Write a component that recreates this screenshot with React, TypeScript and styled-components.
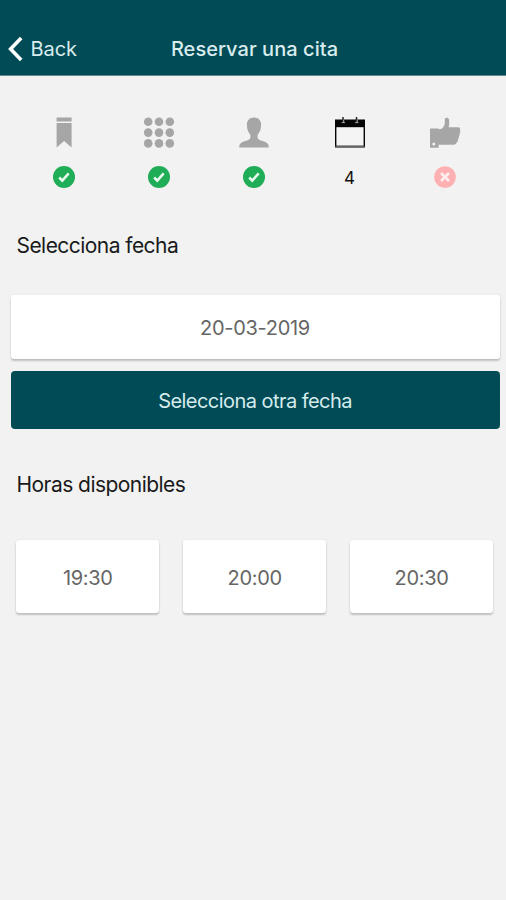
import React from "react";
import styled, { createGlobalStyle } from "styled-components";

const GlobalStyle = createGlobalStyle`
  * { box-sizing: border-box; }
  body {
    margin: 0;
    background: #f2f2f2;
    font-family: Inter, "Liberation Sans", sans-serif;
    color: #1a1a1a;
  }
`;

const Screen = styled.div`
  display: flex;
  flex-direction: column;
  width: 506px;
  height: 900px;
  overflow: hidden;
  background: #f2f2f2;
`;

const Header = styled.header`
  display: grid;
  grid-template-columns: 100px 1fr 97px;
  align-items: center;
  height: 76px;
  padding-top: 22px;
  background: #004b55;
  border-bottom: 1px solid #5f8a90;
  color: #d9ecee;
`;

const BackButton = styled.button`
  display: flex;
  align-items: center;
  gap: 7.5px;
  padding: 0 0 0 8px;
  border: 0;
  background: none;
  color: inherit;
  font: 400 20px/24px Inter, sans-serif;
  letter-spacing: -0.05px;
`;

const Title = styled.h1`
  margin: 0;
  text-align: center;
  font-size: 20px;
  font-weight: 500;
  line-height: 24px;
  letter-spacing: 0.05px;
`;

const Steps = styled.ol`
  display: grid;
  grid-template-columns: repeat(5, 1fr);
  margin: 41px 13.5px 0 16px;
  padding: 0;
  list-style: none;
`;

const Step = styled.li`
  display: flex;
  flex-direction: column;
  align-items: center;
  gap: 18px;
`;

const StepIcon = styled.svg`
  display: block;
  width: 32px;
  height: 31px;
  fill: #a6a6a6;
`;

const StatusIcon = styled.svg`
  display: block;
  width: 22px;
  height: 22px;
`;

const StepNumber = styled.span`
  height: 22px;
  font-size: 17px;
  line-height: 25px;
  color: #111;
`;

const SectionTitle = styled.h2<{ $top: number }>`
  margin: ${(p) => p.$top}px 0 0 16.5px;
  font-size: 21px;
  font-weight: 400;
  line-height: 26px;
  letter-spacing: -0.55px;
`;

const DateActions = styled.div`
  display: flex;
  flex-direction: column;
  gap: 12px;
  margin: 36px 6.5px 0 10.5px;
`;

const Card = styled.button<{ $height: number }>`
  height: ${(p) => p.$height}px;
  padding: 2px 0 0;
  border: 0;
  border-radius: 3px;
  background: #fff;
  box-shadow: 0 2px 2px rgba(0, 0, 0, 0.2), 0 0 2px rgba(0, 0, 0, 0.08);
  color: #666;
  font: 400 20px/24px Inter, sans-serif;
  letter-spacing: -0.3px;
`;

const PrimaryButton = styled.button`
  height: 58px;
  padding: 2px 0 0;
  border: 0;
  border-radius: 4px;
  background: #004b55;
  color: #d5ebee;
  font: 400 20px/24px Inter, sans-serif;
  letter-spacing: -0.55px;
`;

const Hours = styled.div`
  display: grid;
  grid-template-columns: repeat(3, 1fr);
  gap: 24px;
  margin: 42px 13px 0 16.4px;
`;

const DoneStatus = () => (
  <StatusIcon viewBox="0 0 22 22">
    <circle cx="11" cy="11" r="11" fill="#20ad57" />
    <path d="M6.2 11.5 9.3 14.6 15.7 7.4" fill="none" stroke="#e9faef" strokeWidth="2.5" />
  </StatusIcon>
);

const PendingStatus = () => (
  <StatusIcon viewBox="0 0 22 22">
    <circle cx="11" cy="11" r="10.8" fill="#ffb0b2" />
    <path d="M7 7 15 15M15 7 7 15" fill="none" stroke="#fff0f0" strokeWidth="2.5" />
  </StatusIcon>
);

const dots = [5.2, 16, 26.8];

export default function App() {
  return (
    <>
      <GlobalStyle />
      <Screen>
        <Header>
          <BackButton>
            <svg width="15" height="26" viewBox="0 0 15 26" fill="none" stroke="#fff" strokeWidth="3.6">
              <path d="M13.2 2 2.6 13 13.2 24" />
            </svg>
            Back
          </BackButton>
          <Title>Reservar una cita</Title>
        </Header>
        <Steps>
          <Step>
            <StepIcon viewBox="0 0 32 31">
              <path d="M8.6.5h15v4h-15zM8.6 6h15v24.5L16.1 24 8.6 30.5z" />
            </StepIcon>
            <DoneStatus />
          </Step>
          <Step>
            <StepIcon viewBox="0 0 32 31">
              {dots.map((y) => dots.map((x) => <circle key={`${x}-${y}`} cx={x} cy={y - 0.4} r="4.3" />))}
            </StepIcon>
            <DoneStatus />
          </Step>
          <Step>
            <StepIcon viewBox="0 0 32 31">
              <path d="M16 .5c-4.6 0-7.3 3-7.1 7.5.1 4.9 1.6 7.7 3.5 9.7v2.8c0 1.6-1.4 2.3-3.4 3C4.5 25 1.2 25.5 1.2 30.5h29.6c0-5-3.3-5.5-7.8-7-2-.7-3.4-1.4-3.4-3v-2.8c1.900-2 3.400-4.800 3.500-9.700C23.300 3.500 20.600.5 16 .5z" />
            </StepIcon>
            <DoneStatus />
          </Step>
          <Step>
            <StepIcon viewBox="0 0 32 31">
              <path d="M1 2.5h30v28H1z" fill="#050505" />
              <path d="M2.400 10.200h27.200v18.500H2.400z" fill="#f4f4f4" />
              <path d="M1.500 29.500h29" stroke="#666" strokeWidth="1.5" />
              <path d="M9 0v4.500M22.500 0v4.500" stroke="#222" strokeWidth="1.5" />
              <path d="M7.700 5.600h3.200M9.700 2.600v3M21.200 5.600h3.200M23.200 2.600v3" fill="none" stroke="#aaa" strokeWidth="1" />
            </StepIcon>
            <StepNumber>4</StepNumber>
          </Step>
          <Step>
            <StepIcon viewBox="0 0 32 31">
              <path
                fillRule="evenodd"
                d="M1 11.500h8.600v.8l3.200-.6c1.700-1.400 2.900-3.200 3-5.400V2.600C15.900 0 19.500 0 20 2.600c.4 2.600.3 5.300-.4 7.600l9.500.1c1.900.1 2.500 1.500 1.800 3 .6.900.5 2.100-.3 3 .4 1.100.1 2.200-.7 3 .2 1.100-.1 2.100-.9 2.900.2 1.200-.3 2.400-1.300 3.200-.7 1.500-2 2.400-3.900 2.400H9.600v3H1zM4.800 25.400a1.500 1.500 0 1 0 0 3 1.500 1.500 0 0 0 0-3z"
              />
            </StepIcon>
            <PendingStatus />
          </Step>
        </Steps>
        <SectionTitle $top={45}>Selecciona fecha</SectionTitle>
        <DateActions>
          <Card $height={64}>20-03-2019</Card>
          <PrimaryButton>Selecciona otra fecha</PrimaryButton>
        </DateActions>
        <SectionTitle $top={43}>Horas disponibles</SectionTitle>
        <Hours>
          <Card $height={73}>19:30</Card>
          <Card $height={73}>20:00</Card>
          <Card $height={73}>20:30</Card>
        </Hours>
      </Screen>
    </>
  );
}
